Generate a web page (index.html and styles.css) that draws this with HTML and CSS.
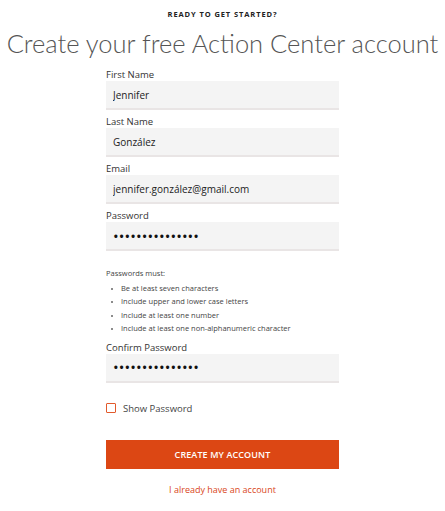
FILE: index.html
```html
<!DOCTYPE html>
<html lang="en">
<head>
    <meta charset="UTF-8">
    <meta name="viewport" content="width=device-width, initial-scale=1.0">
    <title>Create Account</title>
    <link rel="stylesheet" href="styles.css">
</head>
<body>
    <div class="page">
        <div class="eyebrow">READY TO GET STARTED?</div>
        <h1>Create your free Action Center account</h1>

        <form class="signup">
            <div class="field">
                <label for="first-name">First Name</label>
                <input id="first-name" type="text" value="Jennifer">
            </div>
            <div class="field">
                <label for="last-name">Last Name</label>
                <input id="last-name" type="text" value="González">
            </div>
            <div class="field">
                <label for="email">Email</label>
                <input id="email" type="text" value="jennifer.gonzález@gmail.com">
            </div>
            <div class="field">
                <label for="password">Password</label>
                <input id="password" type="password" value="passwordpasswo1">
            </div>

            <div class="rules">
                <p>Passwords must:</p>
                <ul>
                    <li>Be at least seven characters</li>
                    <li>Include upper and lower case letters</li>
                    <li>Include at least one number</li>
                    <li>Include at least one non-alphanumeric character</li>
                </ul>
            </div>

            <div class="field">
                <label for="confirm">Confirm Password</label>
                <input id="confirm" type="password" value="passwordpasswo1">
            </div>

            <label class="show-pass">
                <span class="box"></span>
                Show Password
            </label>

            <button type="button" class="submit">CREATE MY ACCOUNT</button>
            <a class="login-link" href="#">I already have an account</a>
        </form>
    </div>
</body>
</html>
```

FILE: styles.css
```css
/* Basic Reset */
* {
    margin: 0;
    padding: 0;
    box-sizing: border-box;
}

body {
    font-family: 'Open Sans', 'Noto Sans', sans-serif;
    background: #fff;
    color: #333;
}

.page {
    width: 445px;
    text-align: center;
}

.eyebrow {
    padding-top: 8px;
    height: 20px;
    font-size: 7.5px;
    font-weight: 700;
    letter-spacing: 0.9px;
    color: #222;
    line-height: 12px;
}

h1 {
    font-family: 'Lato', 'Open Sans', sans-serif;
    font-weight: 300;
    font-size: 25.5px;
    line-height: 32px;
    color: #555;
    margin-top: 7px;
    white-space: nowrap;
}

.signup {
    width: 233px;
    margin: 9px auto 0;
    text-align: left;
}

.field {
    margin-bottom: 5px;
}

.field label {
    display: block;
    font-size: 9.5px;
    line-height: 13px;
    color: #333;
}

.field input {
    display: block;
    width: 100%;
    height: 29px;
    border: none;
    border-bottom: 2px solid #e9e5e5;
    background: #f4f4f4;
    padding: 0 7px;
    font-family: 'Open Sans', sans-serif;
    font-size: 10px;
    color: #222;
    outline: none;
}

.field input[type="password"] {
    font-size: 15px;
    letter-spacing: 0.1px;
    color: #111;
}

.rules {
    margin-top: 16px;
    color: #444;
    font-size: 7.5px;
    line-height: 13.6px;
    margin-bottom: 5px;
}

.rules p {
    margin-bottom: 1px;
}

.rules ul {
    list-style: none;
}

.rules li {
    position: relative;
    padding-left: 15px;
}

.rules li::before {
    content: "";
    position: absolute;
    left: 5px;
    top: 6px;
    width: 2px;
    height: 2px;
    border-radius: 50%;
    background: #666;
}

.show-pass {
    display: flex;
    align-items: center;
    gap: 7px;
    margin-top: 19px;
    font-size: 9.5px;
    color: #444;
}

.show-pass .box {
    width: 10px;
    height: 10px;
    border: 1.5px solid #e25a2c;
    border-radius: 1px;
}

.submit {
    display: block;
    width: 100%;
    height: 29px;
    margin-top: 25px;
    background: #dc4714;
    border: none;
    color: #fff;
    font-family: 'Open Sans', sans-serif;
    font-size: 9px;
    font-weight: 600;
    letter-spacing: 0.1px;
    cursor: pointer;
}

.login-link {
    display: block;
    margin-top: 14px;
    text-align: center;
    font-size: 9px;
    color: #d9461a;
    text-decoration: none;
}
```
